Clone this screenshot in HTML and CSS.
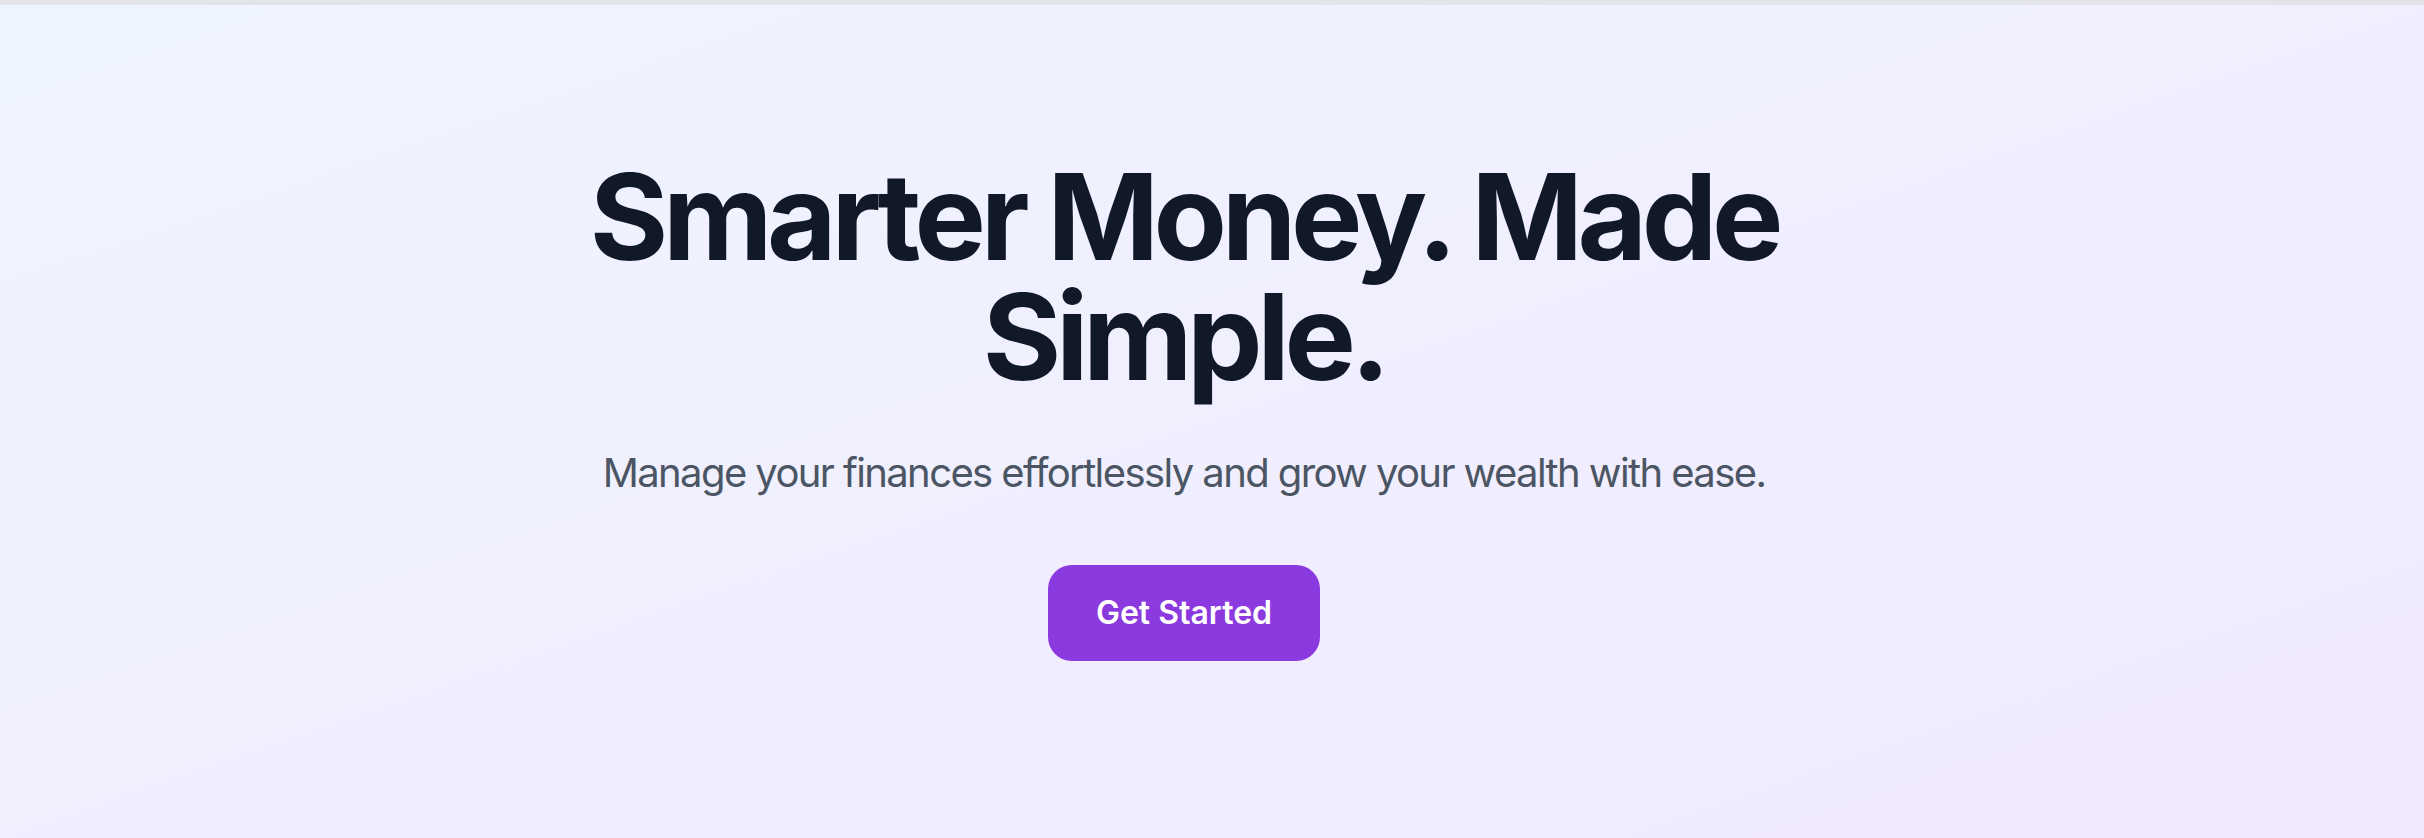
FILE: index.html
```html
<!DOCTYPE html>
<html lang="en">
<head>
<meta charset="utf-8">
<title>Smarter Money. Made Simple.</title>
<link rel="stylesheet" href="styles.css">
</head>
<body>
<div class="topbar"></div>
<section class="hero">
  <div class="hero-inner">
    <h1 class="hero-title">Smarter Money. Made Simple.</h1>
    <p class="hero-sub">Manage your finances effortlessly and grow your wealth with ease.</p>
    <a class="hero-btn" href="#">Get Started</a>
  </div>
</section>
</body>
</html>
```
FILE: styles.css
```css
html, body {
  margin: 0;
  padding: 0;
  height: 100%;
}
body {
  font-family: Inter, "Noto Sans", "Liberation Sans", sans-serif;
  display: flex;
  flex-direction: column;
  background: #eff4ff;
}
.topbar {
  height: 5px;
  background: #e3e4e8;
  flex: none;
}
.hero {
  flex: 1;
  background: linear-gradient(to bottom right, #eff5ff, #f1e9fe);
  padding: 152px 56px 0 0;
  display: flex;
  justify-content: center;
}
.hero-inner {
  max-width: 1536px;
  display: flex;
  flex-direction: column;
  align-items: center;
  text-align: center;
}
.hero-title {
  margin: 0 0 48px;
  font-size: 120px;
  line-height: 120px;
  font-weight: 700;
  letter-spacing: -5.4px;
  color: #111827;
}
.hero-sub {
  margin: 0 0 64px;
  font-size: 40px;
  line-height: 56px;
  letter-spacing: -1.6px;
  color: #4b5563;
}
.hero-btn {
  display: inline-block;
  padding: 24px 48px;
  font-size: 32px;
  line-height: 48px;
  font-weight: 600;
  color: #ffffff;
  background: #8b3ae0;
  border-radius: 24px;
  text-decoration: none;
}
```
